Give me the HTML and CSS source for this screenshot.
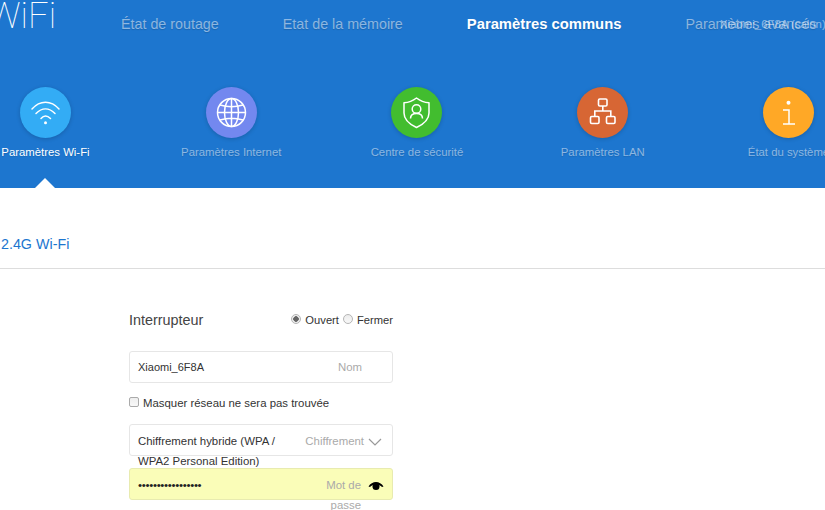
FILE: index.html
```html
<!DOCTYPE html>
<html lang="fr">
<head>
<meta charset="utf-8">
<title>Paramètres Wi-Fi</title>
<link rel="stylesheet" href="styles.css">
</head>
<body>
<header class="hero">
  <div class="topbar">
    <div class="logo">WiFi</div>
    <nav class="topnav">
      <a class="topnav-item">État de routage</a>
      <a class="topnav-item">Etat de la mémoire</a>
      <a class="topnav-item active">Paramètres communs</a>
      <a class="topnav-item">Paramètres avancés</a>
    </nav>
    <div class="router-name">Xiaomi_6F8A (salon)</div>
  </div>
  <div class="tiles">
    <div class="tile active">
      <div class="disc disc-wifi">
        <svg viewBox="0 0 51 51" class="icon"><g fill="none" stroke="#fff" stroke-width="1.5" stroke-linecap="round"><path d="M12 22C20 13 31 13 39 22"/><path d="M16 26.5C22 20.5 29 20.5 35 26.5"/><path d="M21 31.5C24 28 27 28 30.5 31.5"/></g><circle cx="25.5" cy="35.7" r="1.5" fill="#fff"/></svg>
      </div>
      <span class="tile-label">Paramètres Wi-Fi</span>
    </div>
    <div class="tile">
      <div class="disc disc-net">
        <svg viewBox="0 0 51 51" class="icon"><g fill="none" stroke="#fff" stroke-width="1.5"><circle cx="25.5" cy="25.5" r="14"/><ellipse cx="25.5" cy="25.5" rx="7" ry="14"/><path d="M25.5 11.5V39.5M11.5 25.5H39.5M14 18C21 20 30 20 37 18M14 33C21 31 30 31 37 33"/></g></svg>
      </div>
      <span class="tile-label">Paramètres Internet</span>
    </div>
    <div class="tile">
      <div class="disc disc-sec">
        <svg viewBox="0 0 51 51" class="icon"><g fill="none" stroke="#fff" stroke-width="1.5" stroke-linejoin="round"><path d="M25.5 11C30 14.5 34 15.5 38 15.8V26C38 32.5 32 37.5 25.5 40.5C19 37.5 13 32.5 13 26V15.8C17 15.5 21 14.5 25.5 11Z"/><circle cx="25.5" cy="22" r="4.3"/><path d="M19.5 31.5C19.5 27.5 22.5 26.5 25.5 26.5C28.5 26.5 31.5 27.5 31.5 31.5"/></g></svg>
      </div>
      <span class="tile-label">Centre de sécurité</span>
    </div>
    <div class="tile">
      <div class="disc disc-lan">
        <svg viewBox="0 0 51 51" class="icon"><g fill="none" stroke="#fff" stroke-width="1.6"><rect x="21.5" y="12" width="8.5" height="7" rx="1.2"/><rect x="13.5" y="29.5" width="8.5" height="7" rx="1.2"/><rect x="29.5" y="29.5" width="8.5" height="7" rx="1.2"/><path d="M25.8 19V24M17.8 29.5V24H33.8V29.5"/></g></svg>
      </div>
      <span class="tile-label">Paramètres LAN</span>
    </div>
    <div class="tile">
      <div class="disc disc-info">
        <svg viewBox="0 0 51 51" class="icon"><circle cx="25.5" cy="15.7" r="2" fill="#fff"/><path d="M20 23H26V37M20 37H32" fill="none" stroke="#fff" stroke-width="1.5"/></svg>
      </div>
      <span class="tile-label">État du système</span>
    </div>
  </div>
  <div class="caret"></div>
</header>
<main>
  <h2 class="section-title">2.4G Wi-Fi</h2>
  <form class="form">
    <div class="switch-row">
      <span class="switch-label">Interrupteur</span>
      <div class="radios">
        <span class="radio checked"></span><span class="radio-text">Ouvert</span>
        <span class="radio"></span><span class="radio-text">Fermer</span>
      </div>
    </div>
    <div class="field">
      <div class="value value-name">Xiaomi_6F8A</div>
      <div class="hint">Nom</div>
    </div>
    <div class="check-row">
      <span class="checkbox"></span><span>Masquer réseau ne sera pas trouvée</span>
    </div>
    <div class="field field-select">
      <div class="value value-narrow">Chiffrement hybride (WPA / WPA2 Personal Edition)</div>
      <div class="hint hint-select">Chiffrement</div>
      <svg class="chevron" viewBox="0 0 14 8"><path d="M1 1L7 7L13 1" fill="none" stroke="#999" stroke-width="1.2"/></svg>
    </div>
    <div class="field field-pass">
      <div class="value dots">•••••••••••••••••</div>
      <div class="hint hint-pass">Mot de passe</div>
      <svg class="eye" viewBox="0 0 16 11"><path d="M0.5 6.5C4 0.5 12 0.5 15.5 6.5L14 7C11.5 3.5 4.5 3.5 2 7Z" fill="#000"/><circle cx="8" cy="6.5" r="3.5" fill="#000"/></svg>
    </div>
  </form>
</main>
</body>
</html>
```
FILE: styles.css
```css
* { box-sizing: border-box; }
html, body { margin: 0; height: 510px; overflow: hidden; }
body { width: 825px; background: #fff; font-family: "Liberation Sans", Arial, sans-serif; color: #333; }

.hero { position: relative; height: 188px; background: #1d76cf; overflow: hidden; }
.topbar { position: relative; display: flex; height: 87px; }
.logo { position: absolute; left: -12px; top: -5px; font-family: Roboto, sans-serif; font-weight: 100; font-size: 36px; line-height: 42px; color: #fff; }
.topnav { display: flex; gap: 64px; padding-left: 121px; padding-top: 16px; white-space: nowrap; }
.topnav-item { font-size: 14.3px; line-height: 16px; color: rgba(255,255,255,.5); text-shadow: 0 1px 1px rgba(0,0,0,.15); }
.topnav-item.active { color: #fff; font-weight: 700; font-size: 14.8px; }
.router-name { position: absolute; left: 720px; top: 17px; font-size: 11.4px; line-height: 14px; white-space: nowrap; color: rgba(255,255,255,.5); }

.tiles { display: grid; grid-template-columns: repeat(5, 185.75px); margin-left: -47.4px; }
.tile { display: flex; flex-direction: column; align-items: center; }
.disc { width: 51px; height: 51px; border-radius: 50%; box-shadow: 0 1px 4px rgba(0,0,0,.18); }
.disc-wifi { background: #33acf5; }
.disc-net { background: #7388ef; }
.disc-sec { background: #42bd2f; }
.disc-lan { background: #d76634; }
.disc-info { background: #ffa826; }
.icon { display: block; width: 51px; height: 51px; }
.tile-label { margin-top: 7px; font-size: 11.35px; line-height: 14px; white-space: nowrap; color: rgba(255,255,255,.5); text-shadow: 0 1px 1px rgba(0,0,0,.12); }
.tile.active .tile-label { color: #fff; }
.caret { position: absolute; left: 35px; bottom: 0; width: 0; height: 0; border-left: 10px solid transparent; border-right: 10px solid transparent; border-bottom: 10px solid #fff; }

.section-title { margin: 0; height: 81px; padding: 48px 0 0 1px; border-bottom: 1px solid #ddd; font-size: 14.3px; line-height: 16px; font-weight: 400; color: #1d76cf; }

.form { width: 264px; margin-left: 129px; padding-top: 42px; font-size: 11.4px; }
.switch-row { display: flex; justify-content: space-between; align-items: center; height: 18px; }
.switch-label { font-size: 14.4px; color: #444; }
.radios { display: flex; align-items: center; }
.radio { width: 10px; height: 10px; margin-right: 4px; margin-top: -3px; border-radius: 50%; border: 1px solid #b5b5b5; background: linear-gradient(#ececec, #f8f8f8); }
.radio.checked { background: radial-gradient(circle, #666 0 2.5px, #eee 3px); }
.radio-text { margin-right: 3px; font-size: 11.2px; }
.radio-text + .radio { margin-left: 1px; }
.radio-text:last-child { margin-right: 0; }

.field { display: flex; height: 32px; border: 1px solid #e6e6e6; border-radius: 3px; background: #fff; line-height: 20px; padding: 5px 0 0 8px; }
.switch-row + .field { margin-top: 22px; }
.value { flex: 1; color: #333; }
.value-name { font-size: 11px; }
.hint { width: 23px; margin-right: 31px; color: #aaa; text-align: right; }
.check-row { display: flex; align-items: center; height: 14px; margin: 13px 0 0; }
.checkbox { width: 10px; height: 10px; margin-right: 4px; margin-top: -2px; border: 1px solid #aaa; border-radius: 2px; background: linear-gradient(#eee, #f8f8f8); }
.field-select { margin-top: 14px; padding-top: 6px; }
.value-narrow { flex: none; width: 142px; }
.hint-select { flex: 1; width: auto; margin-right: 4px; }
.chevron { flex: none; width: 14px; height: 8px; margin: 7px 10px 0 0; }
.field-pass { margin-top: 12px; background: #fafdb8; border-color: #e8ebb0; padding-top: 6px; }
.dots { font-size: 11.5px; letter-spacing: -.3px; color: #222; }
.hint-pass { width: 44px; margin-right: 7px; }
.eye { flex: none; width: 16px; height: 11px; margin: 5px 8px 0 0; }
```
